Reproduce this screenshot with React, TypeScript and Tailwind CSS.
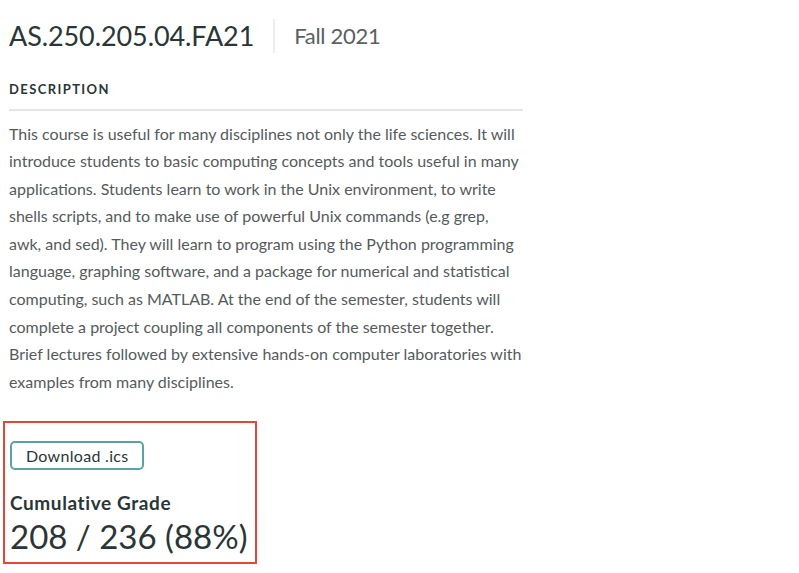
import React from 'react';

const description =
  'This course is useful for many disciplines not only the life sciences. It will introduce students to basic computing concepts and tools useful in many applications. Students learn to work in the Unix environment, to write shells scripts, and to make use of powerful Unix commands (e.g grep, awk, and sed). They will learn to program using the Python programming language, graphing software, and a package for numerical and statistical computing, such as MATLAB. At the end of the semester, students will complete a project coupling all components of the semester together. Brief lectures followed by extensive hands-on computer laboratories with examples from many disciplines.';

const App = () => {
  return (
    <div className="min-h-screen bg-white pl-[9px] pt-[18px] text-[#2a3636]" style={{ fontFamily: 'Lato, "Noto Sans", sans-serif' }}>
      {/* header */}
      <div className="flex items-center">
        <h1 className="text-[27px] leading-[36px] tracking-[-0.1px]">AS.250.205.04.FA21</h1>
        <div className="mx-[19px] h-[34px] w-[2px] bg-[#eceeee]" />
        <span className="text-[22px] leading-[36px] tracking-[-0.3px] text-[#5a5f5f]">Fall 2021</span>
      </div>

      {/* description */}
      <div className="mt-[26px] w-[514px]">
        <h2 className="border-b-2 border-[#e3e6e6] pb-[9px] text-[13px] font-bold tracking-[1.4px] uppercase">Description</h2>
        <p className="mt-[9px] text-[16px] leading-[27.6px] text-[#555b5b]">{description}</p>
      </div>

      {/* grade box */}
      <div className="ml-[-6px] mt-[26px] w-[254px] border-2 border-[#e0483a] px-[5px] pt-[18px] pb-[5px]">
        <button className="rounded-[5px] border-2 border-[#5aa3a3] px-[14px] py-[1px] text-[16px] leading-[23px] tracking-[0.3px] text-[#2a3636]">
          Download .ics
        </button>
        <div className="mt-[20px] whitespace-nowrap text-[19px] font-bold leading-[25px] tracking-[0.6px]">Cumulative Grade</div>
        <div className="whitespace-nowrap text-[33px] leading-[42px]">208 / 236 (88%)</div>
      </div>
    </div>
  );
};

export default App;
